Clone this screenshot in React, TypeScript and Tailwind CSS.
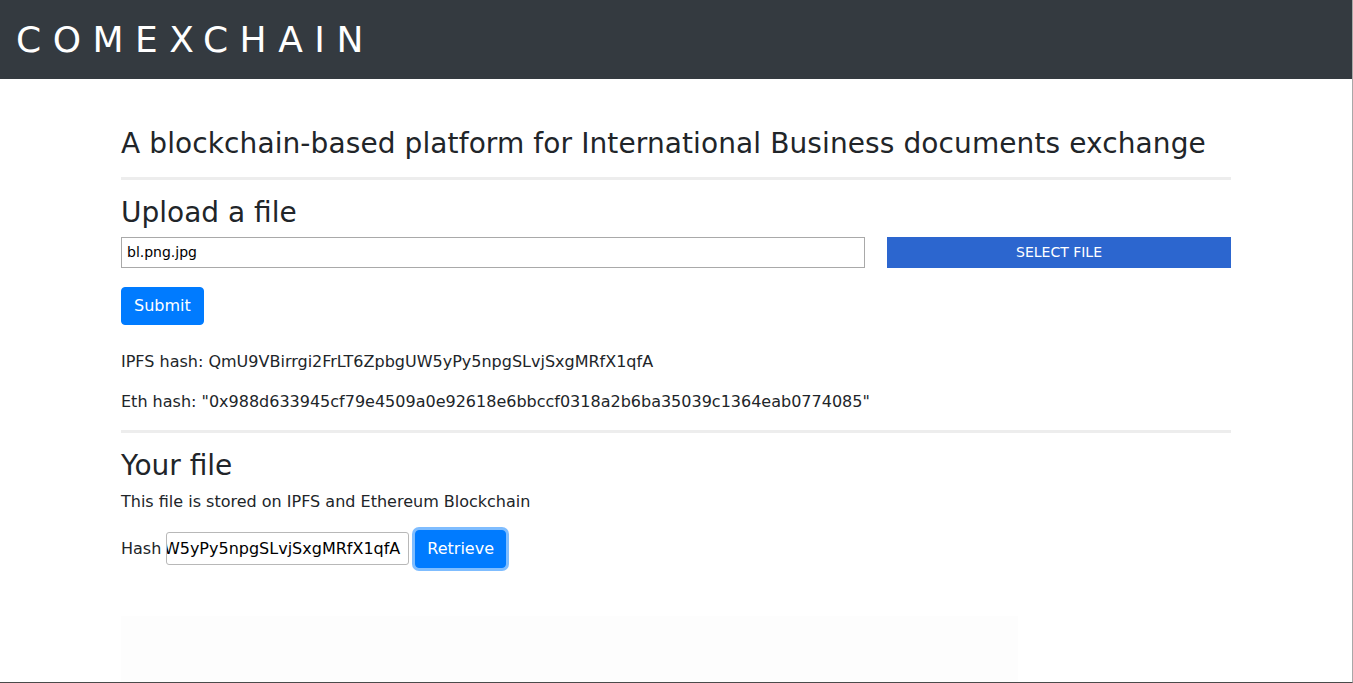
import React from 'react';

const IPFS_HASH = 'QmU9VBirrgi2FrLT6ZpbgUW5yPy5npgSLvjSxgMRfX1qfA';
const ETH_HASH = '"0x988d633945cf79e4509a0e92618e6bbccf0318a2b6ba35039c1364eab0774085"';

const App: React.FC = () => {
  return (
    <div
      className="h-[683px] overflow-hidden border-r border-b border-r-[#a8a8a8] border-b-[#4a4a4a] bg-white text-[#212529]"
      style={{ fontFamily: '"DejaVu Sans", sans-serif' }}
    >
      <header className="flex h-[79px] items-center bg-[#343a40] pl-4">
        <span className="text-[36px] leading-none font-normal tracking-[0.32em] text-white">
          COMEXCHAIN
        </span>
      </header>

      <div className="mx-auto w-[1140px] px-[15px]">
        <h3 className="mt-12 text-[28px] leading-[1.2] tracking-[0.1px]">
          A blockchain-based platform for International Business documents exchange
        </h3>
        <hr className="mt-4 mb-4 border-t-[3px] border-[#ededed]" />

        <h3 className="text-[28px] leading-[1.2]">Upload a file</h3>
        <div className="mt-2 flex items-stretch gap-[22px]">
          <div className="flex h-[31px] w-[744px] items-center border border-[#a9a9a9] px-[5px] text-[14px] text-black">
            bl.png.jpg
          </div>
          <button className="flex flex-1 items-center justify-center bg-[#2c66cf] text-[14px] text-white">
            SELECT FILE
          </button>
        </div>
        <button className="mt-[19px] rounded border border-[#007bff] bg-[#007bff] px-3 py-1.5 text-[16px] leading-6 text-white">
          Submit
        </button>

        <p className="mt-[25px] text-[16px] leading-6">IPFS hash: {IPFS_HASH}</p>
        <p className="mt-4 text-[16px] leading-6">Eth hash: {ETH_HASH}</p>
        <hr className="mt-4 mb-4 border-t-[3px] border-[#ededed]" />

        <h3 className="text-[28px] leading-[1.2]">Your file</h3>
        <p className="mt-[7px] text-[16px] leading-6">This file is stored on IPFS and Ethereum Blockchain</p>

        <div className="mt-4 flex items-center text-[16px]">
          <span>Hash</span>
          <div className="ml-[5px] flex h-[33px] w-[243px] items-center justify-end overflow-hidden rounded-[3px] border border-[#b8b8b8] pr-[8px] whitespace-nowrap text-black">
            {IPFS_HASH}
          </div>
          <button className="ml-[6px] rounded border border-[#007bff] bg-[#007bff] px-[11px] py-1.5 leading-6 text-white shadow-[0_0_0_3px_rgba(0,123,255,0.5)]">
            Retrieve
          </button>
        </div>

        <div className="mt-12 h-[80px] w-[897px] bg-[#fdfdfd]" />
      </div>
    </div>
  );
};

export default App;
